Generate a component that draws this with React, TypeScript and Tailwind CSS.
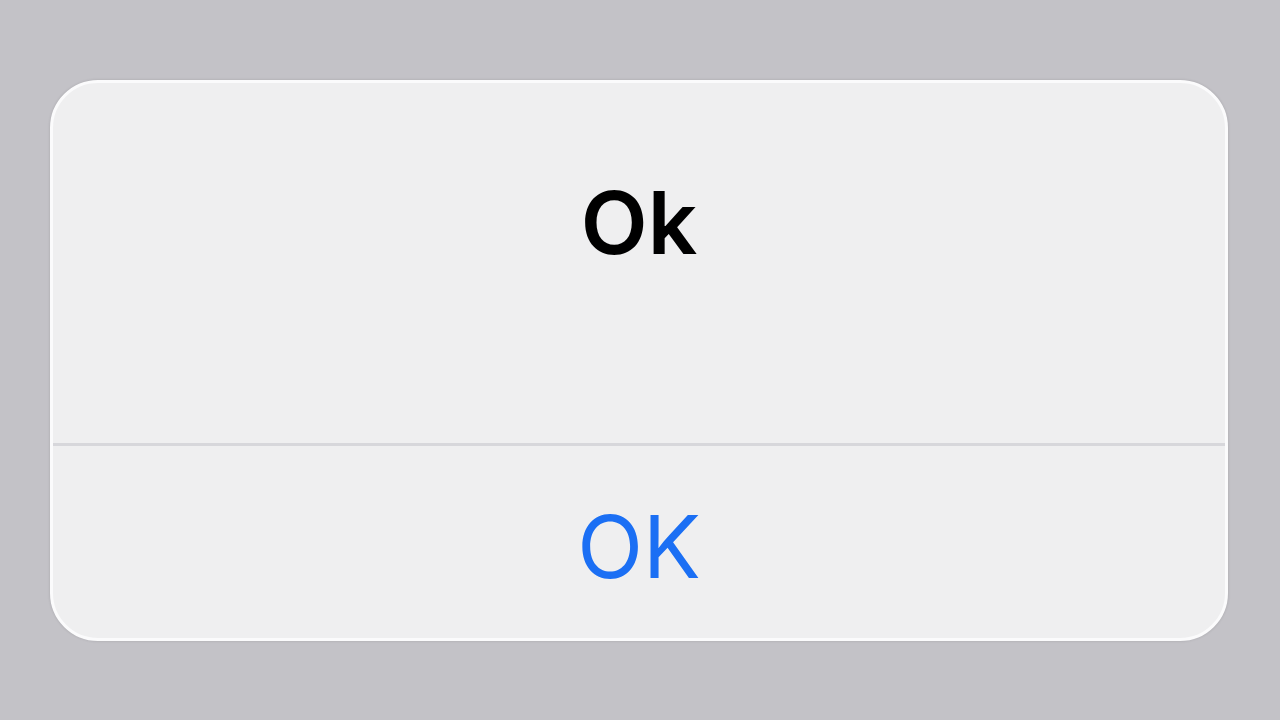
export default function App() {
  return (
    <div className="h-[720px] w-[1280px] bg-[#c3c2c7] pt-[80px] pl-[50px]" style={{ fontFamily: "Inter, 'Noto Sans', sans-serif" }}>
      <div className="flex h-[561px] w-[1178px] flex-col overflow-hidden rounded-[48px] border-[3px] border-[#fbfbfc] bg-[#efeff0] shadow-[0_0_3px_rgba(0,0,0,0.15)]">
        <div className="flex h-[360px] items-start justify-center pt-[96px]">
          <span className="text-[87px] leading-[88px] font-semibold text-black">Ok</span>
        </div>
        <div className="h-[3px] bg-[#d7d7db]" />
        <div className="flex flex-1 items-start justify-center pt-[57px]">
          <span className="text-[86px] leading-[88px] font-normal text-[#1b6ff4]">OK</span>
        </div>
      </div>
    </div>
  );
}
